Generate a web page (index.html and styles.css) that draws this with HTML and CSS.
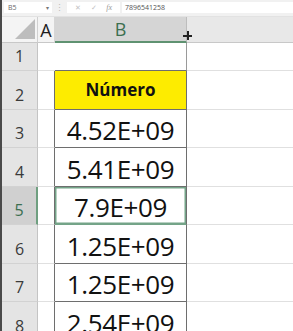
FILE: index.html
```html
<!DOCTYPE html>
<html>
<head>
<meta charset="utf-8">
<link rel="stylesheet" href="styles.css">
</head>
<body>
<div class="app">
  <div class="formula-bar">
    <div class="namebox"><span>B5</span><span class="caret">▾</span></div>
    <div class="sep">⋮</div>
    <div class="fxbox"><span>✕</span><span>✓</span><span class="fx">fx</span></div>
    <div class="input">7896541258</div>
  </div>
  <div class="sheet">
    <div class="corner"><span class="tri"></span></div>
    <div class="colh cola">A</div>
    <div class="colh colb">B<span class="cursor"></span></div>
    <div class="colh rest"></div>

    <div class="rowh">1</div><div class="c"></div><div class="c b1"></div><div class="c"></div>
    <div class="rowh">2</div><div class="c ab"></div><div class="c bb head">Número</div><div class="c"></div>
    <div class="rowh">3</div><div class="c ab"></div><div class="c bb num">4.52E+09</div><div class="c"></div>
    <div class="rowh">4</div><div class="c ab"></div><div class="c bb num">5.41E+09</div><div class="c"></div>
    <div class="rowh sel">5</div><div class="c ab"></div><div class="c bb num active">7.9E+09</div><div class="c"></div>
    <div class="rowh">6</div><div class="c ab"></div><div class="c bb num">1.25E+09</div><div class="c"></div>
    <div class="rowh">7</div><div class="c ab"></div><div class="c bb num">1.25E+09</div><div class="c"></div>
    <div class="rowh">8</div><div class="c ab"></div><div class="c bb num">2.54E+09</div><div class="c"></div>
  </div>
</div>
</body>
</html>
```

FILE: styles.css
```css
html, body {
  margin: 0;
  padding: 0;
  background: #ffffff;
  overflow: hidden;
}
.app {
  width: 293px;
  height: 331px;
  border-left: 2px solid #4a4a4a;
  box-sizing: border-box;
  font-family: "Open Sans", "Liberation Sans", sans-serif;
  overflow: hidden;
}
.formula-bar {
  height: 17px;
  background: #f1f1f1;
  display: flex;
  align-items: flex-start;
  padding-top: 2px;
  box-sizing: border-box;
  font-size: 7px;
  color: #6a6a6a;
  border-bottom: 1px solid #e2e2e2;
}
.namebox {
  margin-left: 2px;
  width: 48px;
  height: 11px;
  background: #fff;
  display: flex;
  align-items: center;
  justify-content: space-between;
  padding: 0 3px 0 4px;
  box-sizing: border-box;
}
.caret { font-size: 6px; color: #777; }
.sep {
  width: 15px;
  text-align: center;
  color: #bbb;
  font-size: 9px;
  line-height: 11px;
}
.fxbox {
  width: 53px;
  height: 11px;
  background: #fff;
  display: flex;
  align-items: center;
  justify-content: space-around;
  color: #c2c2c2;
  font-size: 7px;
  padding: 0 3px;
  box-sizing: border-box;
}
.fx { font-style: italic; color: #9a9a9a; font-family: "Liberation Serif", serif; font-size: 8px; }
.input {
  margin-left: 2px;
  width: 168px;
  height: 11px;
  background: #fff;
  padding-left: 3px;
  line-height: 11px;
  color: #555;
  font-size: 7px;
}
.sheet {
  display: grid;
  grid-template-columns: 36px 17px 132px 1fr;
  grid-template-rows: 26px 28px repeat(7, 38.5px);
}
.corner {
  background: #f4f4f4;
  border-right: 1px solid #d0d0d0;
  border-bottom: 1px solid #c8c8c8;
  position: relative;
}
.tri {
  position: absolute;
  right: 2px;
  bottom: 3px;
  width: 0;
  height: 0;
  border-left: 20px solid transparent;
  border-bottom: 20px solid #bdbdbd;
}
.colh {
  display: flex;
  align-items: center;
  justify-content: center;
  font-size: 18px;
  color: #1e1e1e;
  border-bottom: 1px solid #c8c8c8;
  box-sizing: border-box;
}
.cola { background: #f4f4f4; border-right: 1px solid #d6d6d6; }
.colb {
  background: #d5d5d5;
  color: #3c6f50;
  border-bottom: 2px solid #5f9271;
  border-right: 1px solid #bdbdbd;
  position: relative;
}
.rest { background: #e8e8e8; }
.cursor {
  position: absolute;
  right: -6px;
  bottom: 1px;
  width: 9px;
  height: 9px;
  background:
    linear-gradient(#222, #222) center / 9px 2px no-repeat,
    linear-gradient(#222, #222) center / 2px 9px no-repeat;
}
.rowh {
  background: #e4e4e4;
  border-right: 1px solid #c4c4c4;
  border-bottom: 1px solid #d2d2d2;
  display: flex;
  align-items: flex-end;
  justify-content: center;
  padding-bottom: 3px;
  box-sizing: border-box;
  font-size: 16px;
  color: #3a3a3a;
}
.rowh.sel {
  background: #d0d0d0;
  color: #3b6f50;
  border-right: 2px solid #6f9f80;
}
.c {
  border-bottom: 1px solid #e0e0e0;
  box-sizing: border-box;
}
.c.ab { border-right: 1px solid #6e6e6e; }
.c.b1 { border-right: 1px solid #9a9a9a; border-bottom: 1px solid #6e6e6e; }
.c.bb {
  border-right: 1px solid #6e6e6e;
  border-bottom: 1px solid #6e6e6e;
  display: flex;
  justify-content: center;
  color: #111;
}
.head {
  background: #fdec00;
  align-items: center;
  font-weight: 700;
  font-size: 17px;
}
.num {
  align-items: flex-end;
  font-size: 26px;
  letter-spacing: -0.4px;
  line-height: 1;
  padding-bottom: 4px;
}
.num.active {
  box-shadow: inset 0 0 0 1.5px #74a488;
  border-bottom-color: #74a488;
}
```
